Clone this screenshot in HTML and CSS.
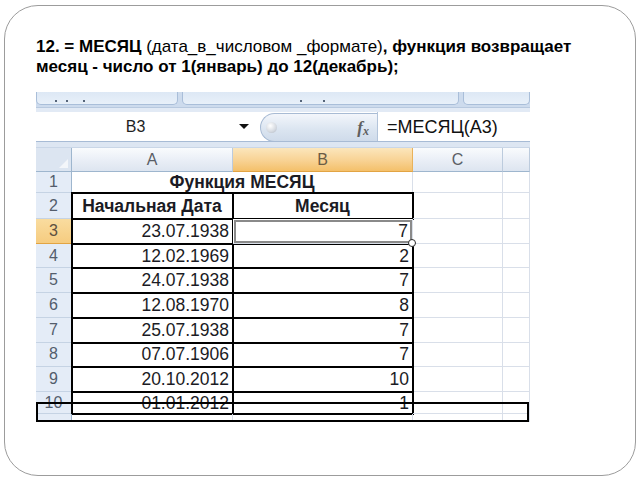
FILE: index.html
```html
<!DOCTYPE html>
<html lang="ru">
<head>
<meta charset="utf-8">
<title>МЕСЯЦ</title>
<link rel="stylesheet" href="styles.css">
</head>
<body>
<div class="slide">
  <p class="title"><b>12. = МЕСЯЦ</b> (дата_в_числовом _формате)<b>, функция возвращает<br>месяц - число от 1(январь) до 12(декабрь);</b></p>
  <div class="excel">
    <div class="ribbon">
      <div class="rgroup g1"><span class="dot d1"></span><span class="dot d2"></span><span class="dot d3"></span></div>
      <div class="rgroup g2"><span class="dot d4"></span><span class="dot d5"></span></div>
      <div class="rgroup g3"></div>
    </div>
    <div class="band"></div>
    <div class="fbar">
      <div class="namebox">B3</div>
      <div class="ddarrow"><span class="tri"></span></div>
      <div class="pill"><span class="knob"></span><span class="fx"><i>f</i><span class="fxx">x</span></span></div>
      <div class="formula">=МЕСЯЦ(A3)</div>
    </div>
    <div class="band2"></div>
    <div class="sheet">
      <div class="corner"><svg width="9" height="9" viewBox="0 0 9 9"><polygon points="9,0 9,9 0,9" fill="#f3f6fa"/></svg></div>
      <div class="ch">A</div>
      <div class="ch selh">B</div>
      <div class="ch">C</div>
      <div class="ch"></div>

      <div class="rh">1</div>
      <div class="c merged bold">Функция МЕСЯЦ</div>
      <div class="c"></div>
      <div class="c"></div>

      <div class="rh">2</div>
      <div class="c b bold ctr">Начальная Дата</div>
      <div class="c b bold ctr">Месяц</div>
      <div class="c"></div>
      <div class="c"></div>

      <div class="rh selh">3</div>
      <div class="c b">23.07.1938</div>
      <div class="c active">7<span class="handle"></span></div>
      <div class="c"></div>
      <div class="c"></div>

      <div class="rh">4</div>
      <div class="c b">12.02.1969</div>
      <div class="c b">2</div>
      <div class="c"></div>
      <div class="c"></div>

      <div class="rh">5</div>
      <div class="c b">24.07.1938</div>
      <div class="c b">7</div>
      <div class="c"></div>
      <div class="c"></div>

      <div class="rh">6</div>
      <div class="c b">12.08.1970</div>
      <div class="c b">8</div>
      <div class="c"></div>
      <div class="c"></div>

      <div class="rh">7</div>
      <div class="c b">25.07.1938</div>
      <div class="c b">7</div>
      <div class="c"></div>
      <div class="c"></div>

      <div class="rh">8</div>
      <div class="c b">07.07.1906</div>
      <div class="c b">7</div>
      <div class="c"></div>
      <div class="c"></div>

      <div class="rh">9</div>
      <div class="c b">20.10.2012</div>
      <div class="c b">10</div>
      <div class="c"></div>
      <div class="c"></div>

      <div class="rh">10</div>
      <div class="c b">01.01.2012</div>
      <div class="c b">1</div>
      <div class="c"></div>
      <div class="c"></div>

      <div class="rh"></div>
      <div class="c"></div>
      <div class="c"></div>
      <div class="c"></div>
      <div class="c"></div>
    </div>
    <div class="mark"></div>
  </div>
</div>
</body>
</html>
```

FILE: styles.css
```css
html, body {
  margin: 0;
  padding: 0;
  background: #ffffff;
}

body {
  font-family: "Liberation Sans", Arial, sans-serif;
  color: #000;
}

.slide {
  box-sizing: border-box;
  width: 632px;
  height: 471px;
  margin: 5px 0 0 4px;
  border: 1px solid #9c9c9c;
  border-radius: 34px;
  padding: 31px 0 0 31px;
}

.title {
  margin: 0;
  font-size: 17px;
  line-height: 20px;
  font-weight: normal;
  color: #000;
  white-space: nowrap;
}

.title b {
  font-weight: bold;
}

/* ---------- Excel screenshot ---------- */
.excel {
  position: relative;
  margin-top: 15px;
  width: 494px;
  height: 330px;
  overflow: hidden;
  background: #fff;
}

.ribbon {
  display: flex;
  gap: 4px;
  height: 15px;
  background: #cddbed;
}

.rgroup {
  position: relative;
  box-sizing: border-box;
  height: 13px;
  background: linear-gradient(#dde8f5, #e8f0f9);
  border: 1px solid #a9bed9;
  border-top: none;
  border-radius: 0 0 5px 5px;
}

.g1 { width: 142px; }
.g2 { width: 277px; }
.g3 { flex: 1; }

.dot {
  position: absolute;
  top: 8px;
  width: 2px;
  height: 2px;
  background: #56657a;
}

.d1 { left: 18px; }
.d2 { left: 29px; }
.d3 { left: 46px; }
.d4 { left: 117px; }
.d5 { left: 140px; }

.band {
  box-sizing: border-box;
  height: 5px;
  background: #e2eaf5;
  border-top: 1px solid #b8c9df;
}

.fbar {
  display: flex;
  height: 29px;
  background: #fff;
}

.namebox {
  width: 199px;
  text-align: center;
  font-size: 16px;
  line-height: 30px;
  color: #1e1e1e;
}

.ddarrow {
  width: 17px;
  display: flex;
  align-items: center;
  justify-content: center;
}

.tri {
  width: 0;
  height: 0;
  border-left: 5px solid transparent;
  border-right: 5px solid transparent;
  border-top: 5px solid #111;
}

.pill {
  position: relative;
  box-sizing: border-box;
  margin-left: 8px;
  margin-top: 1px;
  width: 117px;
  height: 29px;
  border: 1px solid #a8bbd4;
  border-right: none;
  border-radius: 15px 0 0 15px;
  background: linear-gradient(#f3f6fb, #dae4f0 60%, #cfdbea);
  display: flex;
  align-items: center;
  justify-content: space-between;
  padding: 0 8px 0 5px;
}

.knob {
  width: 11px;
  height: 11px;
  border-radius: 50%;
  background: radial-gradient(circle at 40% 35%, #ffffff, #d4d9e0 60%, #a9b1bc);
}

.fx {
  font-family: "Liberation Serif", "Times New Roman", serif;
  font-style: italic;
  font-weight: bold;
  font-size: 17px;
  color: #5f5f5f;
  line-height: 1;
}

.fx i {
  font-style: italic;
}

.fxx {
  font-size: 12px;
  position: relative;
  top: 2px;
}

.formula {
  flex: 1;
  border-left: 1px solid #b3c4da;
  padding-left: 9px;
  font-size: 18px;
  line-height: 30px;
  color: #111;
}

.band2 {
  box-sizing: border-box;
  height: 7px;
  background: #dde6f2;
  border-top: 1px solid #a7bbd5;
  border-bottom: 1px solid #c9d6e7;
}

/* ---------- grid ---------- */
.sheet {
  display: grid;
  grid-template-columns: 36px 161px 180px 90px 27px;
  grid-template-rows: 24px 21px 26px repeat(7, 24.72px) 22px 8px;
  font-size: 17.5px;
  color: #1b1b24;
}

.corner {
  box-sizing: border-box;
  background: #dce5f1;
  border-right: 1px solid #9eb6ce;
  border-bottom: 1px solid #9eb6ce;
  display: flex;
  align-items: flex-end;
  justify-content: flex-end;
  padding: 0 3px 3px 0;
}

.ch {
  box-sizing: border-box;
  background: linear-gradient(#f9fbfd, #e9eef6 55%, #dde5f0);
  border-right: 1px solid #bccbdd;
  border-bottom: 1px solid #9eb6ce;
  text-align: center;
  font-size: 16px;
  line-height: 24px;
  color: #5a5e66;
}

.ch.selh {
  background: linear-gradient(#fbe6bc, #f8d293 55%, #f4c06a);
  border-right-color: #e9b25a;
  border-bottom-color: #e2a443;
  color: #6b5c45;
}

.rh {
  box-sizing: border-box;
  background: #e4ecf7;
  border-right: 1px solid #9eb6ce;
  border-bottom: 1px solid #c5d3e4;
  text-align: center;
  font-size: 16px;
  display: flex;
  align-items: center;
  justify-content: center;
  color: #535d6c;
}

.rh.selh {
  background: linear-gradient(#f9dc9f, #f6cc80);
  border-bottom-color: #e2a443;
  color: #5d5040;
}

.c {
  box-sizing: border-box;
  border-right: 1px solid #d9dfe9;
  border-bottom: 1px solid #d9dfe9;
  display: flex;
  align-items: center;
  justify-content: flex-end;
  padding: 1px 3px 0 0;
  white-space: nowrap;
}

.merged {
  grid-column: span 2;
  justify-content: center;
  padding: 0;
}

.bold {
  font-weight: bold;
}

.ctr {
  justify-content: center;
  padding: 1px 0 0 0;
}

.b {
  outline: 2px solid #000;
  outline-offset: -1px;
}

.active {
  position: relative;
  z-index: 1;
  background: #fff;
  outline: 2px solid #8a8a8a;
  outline-offset: -3px;
  padding-right: 4px;
}

.handle {
  position: absolute;
  right: -4px;
  bottom: -4px;
  width: 6px;
  height: 6px;
  border-radius: 50%;
  background: #fff;
  border: 1.5px solid #2b2b2b;
}

.mark {
  position: absolute;
  left: 0;
  top: 310px;
  box-sizing: border-box;
  width: 493px;
  height: 20px;
  border: 2px solid #000;
  z-index: 2;
}
```
